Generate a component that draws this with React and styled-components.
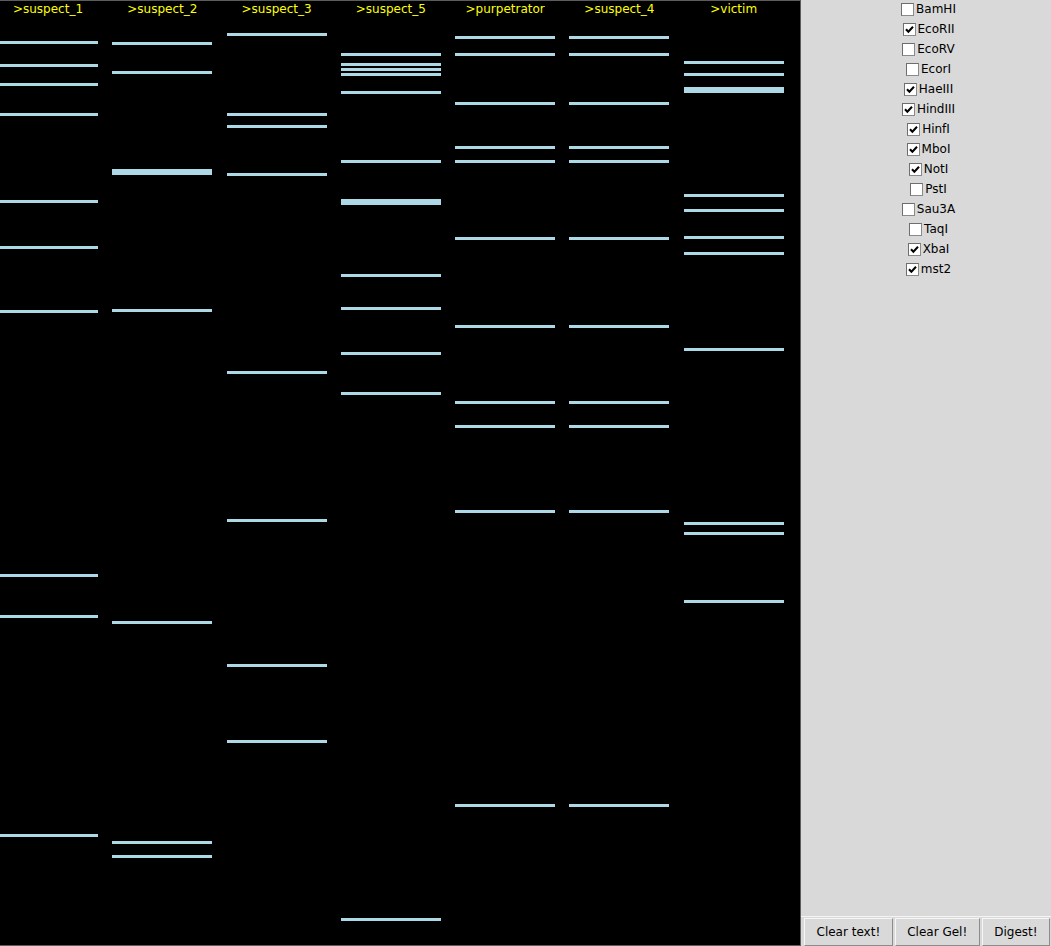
import React, { useState } from "react"
import styled, { createGlobalStyle } from "styled-components"

const GlobalStyle = createGlobalStyle`
  html, body {
    margin: 0;
    padding: 0;
    background: #d9d9d9;
  }
  body {
    font-family: "DejaVu Sans", "Liberation Sans", sans-serif;
    font-size: 12px;
  }
`

const lanes = [
  { name: ">suspect_1", bands: [40, 63, 82, 112, 199, 245, 309, 573, 614, 833] },
  { name: ">suspect_2", bands: [41, 70, [168, 6], 308, 620, 840, 854] },
  { name: ">suspect_3", bands: [32, 112, 124, 172, 370, 518, 663, 739] },
  { name: ">suspect_5", bands: [52, 62, 67, 72, 90, 159, [198, 6], 273, 306, 351, 391, 917] },
  { name: ">purpetrator", bands: [35, 52, 101, 145, 159, 236, 324, 400, 424, 509, 803] },
  { name: ">suspect_4", bands: [35, 52, 101, 145, 159, 236, 324, 400, 424, 509, 803] },
  { name: ">victim", bands: [60, 72, [86, 6], 193, 208, 235, 251, 347, 521, 531, 599] },
]

const enzymes = [
  ["BamHI", false],
  ["EcoRII", true],
  ["EcoRV", false],
  ["EcorI", false],
  ["HaeIII", true],
  ["HindIII", true],
  ["HinfI", true],
  ["MboI", true],
  ["NotI", true],
  ["PstI", false],
  ["Sau3A", false],
  ["TaqI", false],
  ["XbaI", true],
  ["mst2", true],
]

const Window = styled.div`
  display: flex;
  width: 1051px;
  height: 946px;
  overflow: hidden;
`

const Gel = styled.div`
  flex: none;
  width: 800px;
  height: 944px;
  background: #000;
  border-top: 1px solid #5c5c5c;
  border-bottom: 1px solid #5c5c5c;
  border-right: 1px solid #5c5c5c;
  display: grid;
  grid-template-columns: repeat(7, 1fr);
  overflow: hidden;
`

const Lane = styled.div`
  position: relative;
  height: 100%;
`

const LaneLabel = styled.div`
  position: absolute;
  left: -2px;
  width: 100px;
  top: 1px;
  text-align: center;
  color: #ffff00;
  font-size: 12px;
  line-height: 14px;
  white-space: nowrap;
`

const Band = styled.div`
  position: absolute;
  left: -2px;
  width: 100px;
  height: ${p => p.$h}px;
  background: #add8e6;
`

const Side = styled.div`
  flex: 1;
  min-width: 0;
  display: flex;
  flex-direction: column;
  background: #d9d9d9;
`

const EnzymeList = styled.div`
  flex: 1;
  display: flex;
  flex-direction: column;
  margin-top: -1px;
  padding-left: 5px;
`

const EnzymeRow = styled.label`
  height: 20px;
  display: flex;
  align-items: center;
  justify-content: center;
  gap: 2px;
  color: #000;
  cursor: pointer;
  user-select: none;
`

const Box = styled.span`
  width: 11px;
  height: 11px;
  background: #fff;
  border: 1px solid #8a8a8a;
  border-top-color: #6e6e6e;
  border-left-color: #6e6e6e;
  display: flex;
  align-items: center;
  justify-content: center;
`

const ButtonBar = styled.div`
  display: flex;
  gap: 2px;
  padding: 1px 2px 0 3px;
  border-top: 1px solid #f4f4f4;
`

const Button = styled.button`
  flex: none;
  height: 28px;
  padding: 0 11.5px;
  background: #d9d9d9;
  border: 1px solid;
  border-color: #f6f6f6 #8c8c8c #8c8c8c #f6f6f6;
  font-family: "DejaVu Sans", "Liberation Sans", sans-serif;
  font-size: 12px;
  color: #000;
  white-space: nowrap;
`

function Check() {
  return (
    <svg width="9" height="9" viewBox="0 0 9 9">
      <path d="M1 4.2 L3.4 6.8 L8 1.8" fill="none" stroke="#000" strokeWidth="2" />
    </svg>
  )
}

export default function App() {
  const [checked, setChecked] = useState(enzymes.map(e => e[1]))

  const toggle = i => {
    setChecked(c => c.map((v, j) => (j === i ? !v : v)))
  }

  return (
    <Window>
      <GlobalStyle />
      <Gel>
        {lanes.map(lane => (
          <Lane key={lane.name}>
            <LaneLabel>{lane.name}</LaneLabel>
            {lane.bands.map((b, i) => {
              const [y, h] = Array.isArray(b) ? b : [b, 3]
              return <Band key={i} $h={h} style={{ top: y }} />
            })}
          </Lane>
        ))}
      </Gel>
      <Side>
        <EnzymeList>
          {enzymes.map(([name], i) => (
            <EnzymeRow key={name} onClick={() => toggle(i)}>
              <Box>{checked[i] && <Check />}</Box>
              <span>{name}</span>
            </EnzymeRow>
          ))}
        </EnzymeList>
        <ButtonBar>
          <Button>Clear text!</Button>
          <Button>Clear Gel!</Button>
          <Button>Digest!</Button>
        </ButtonBar>
      </Side>
    </Window>
  )
}
